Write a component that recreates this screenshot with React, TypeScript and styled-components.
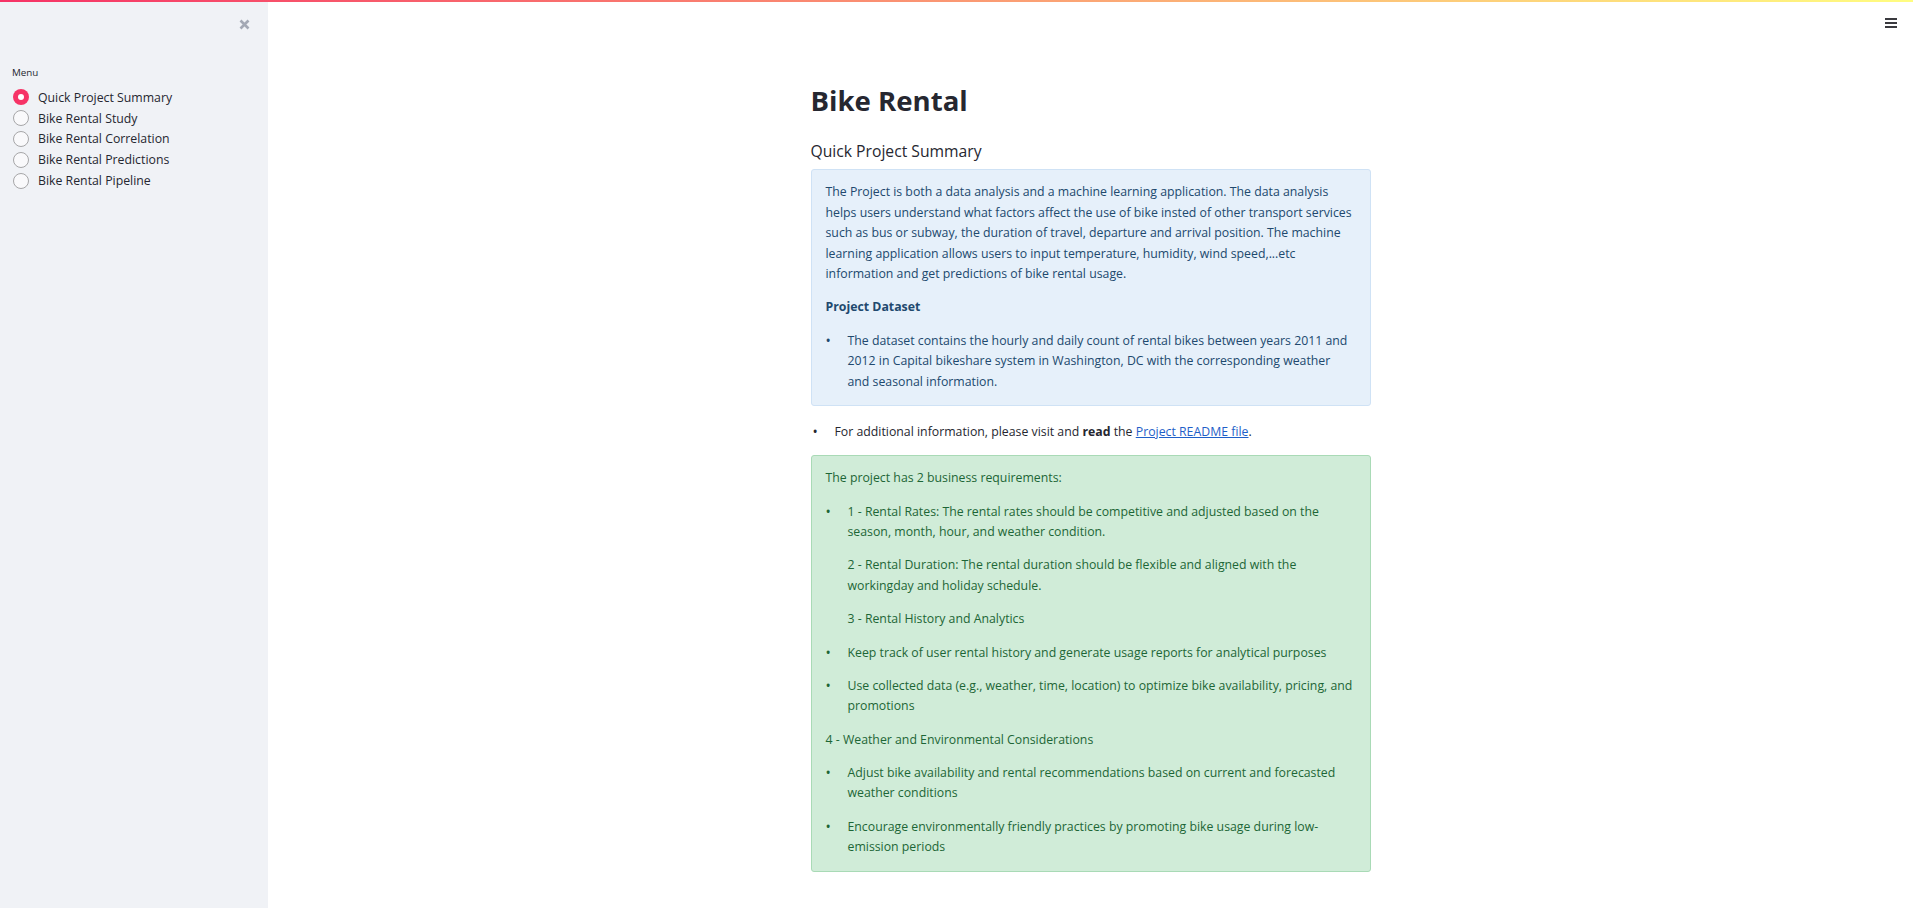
import React from "react";
import styled, { createGlobalStyle } from "styled-components";

const GlobalStyle = createGlobalStyle`
  html, body { margin: 0; padding: 0; background: #ffffff; }
  body { font-family: "Open Sans", "Noto Sans", "Liberation Sans", sans-serif; color: #262730; }
  * { box-sizing: border-box; }
`;

const Decoration = styled.div`
  position: fixed;
  top: 0;
  left: 0;
  right: 0;
  height: 2px;
  background: linear-gradient(90deg, #f63366, #fffd80);
  z-index: 10;
`;

const Shell = styled.div`
  display: flex;
  min-height: 100vh;
`;

const Sidebar = styled.aside`
  width: 268px;
  flex-shrink: 0;
  background: #f0f2f6;
  padding: 0 13px;
  display: flex;
  flex-direction: column;
`;

const SidebarHeader = styled.div`
  display: flex;
  justify-content: flex-end;
  padding: 17px 4px 0 0;
  height: 66px;
`;

const CloseButton = styled.button`
  border: none;
  background: transparent;
  padding: 0;
  width: 14px;
  height: 14px;
  display: flex;
  align-items: center;
  justify-content: center;
  cursor: pointer;
`;

const WidgetLabel = styled.div`
  font-size: 9.8px;
  line-height: 14px;
  color: #262730;
  margin-left: -1px;
  margin-bottom: 7px;
`;

const RadioGroup = styled.div`
  display: flex;
  flex-direction: column;
`;

const RadioRow = styled.label`
  display: flex;
  align-items: center;
  height: 20.8px;
  gap: 9px;
  font-size: 12.3px;
  color: #262730;
  cursor: pointer;
`;

const RadioCircle = styled.span<{ $checked: boolean }>`
  width: 16px;
  height: 16px;
  border-radius: 50%;
  flex-shrink: 0;
  display: flex;
  align-items: center;
  justify-content: center;
  background: ${(p) => (p.$checked ? "#f63366" : "#f9f9fb")};
  border: ${(p) => (p.$checked ? "none" : "1.5px solid #a6a6a8")};
  &::after {
    content: "";
    display: ${(p) => (p.$checked ? "block" : "none")};
    width: 6px;
    height: 6px;
    border-radius: 50%;
    background: #ffffff;
  }
`;

const Main = styled.main`
  flex: 1;
  position: relative;
  display: flex;
  justify-content: center;
`;

const MenuButton = styled.button`
  position: absolute;
  top: 16px;
  right: 15px;
  width: 14px;
  height: 14px;
  border: none;
  background: transparent;
  display: flex;
  flex-direction: column;
  justify-content: space-between;
  padding: 2px 1px;
`;

const MenuLine = styled.span`
  display: block;
  height: 1.6px;
  width: 12px;
  background: #3a3a3f;
`;

const Content = styled.div`
  width: 560px;
  padding-top: 82px;
  padding-bottom: 40px;
  display: flex;
  flex-direction: column;
`;

const Title = styled.h1`
  margin: 0;
  font-size: 27.6px;
  line-height: 36px;
  font-weight: 700;
  color: #262730;
`;

const SubHeading = styled.h3`
  margin: 23px 0 8px;
  font-size: 15.7px;
  line-height: 20px;
  font-weight: 400;
  color: #262730;
`;

const Alert = styled.div<{ $kind: "info" | "success" }>`
  border-radius: 3px;
  padding: 12px 14px 0;
  font-size: 12.3px;
  line-height: 20.5px;
  background: ${(p) => (p.$kind === "info" ? "#e6f0fa" : "#d0ecd8")};
  border: 1px solid ${(p) => (p.$kind === "info" ? "#cfe2f5" : "#a9dab6")};
  color: ${(p) => (p.$kind === "info" ? "#21496e" : "#1d6636")};
`;

const Para = styled.p<{ $bold?: boolean; $endInset?: number }>`
  margin: 0 0 12.8px;
  padding-right: ${(p) => p.$endInset ?? 0}px;
  font-weight: ${(p) => (p.$bold ? 700 : 400)};
`;

const List = styled.ul<{ $inset?: number }>`
  list-style: none;
  margin: 0;
  padding: 0 0 0 ${(p) => p.$inset ?? 0}px;
`;

const Item = styled.li`
  display: grid;
  grid-template-columns: 22px 1fr;
`;

const Marker = styled.span`
  font-size: 14px;
  line-height: 20.5px;
`;

const Plain = styled.div`
  margin: 16px 0 13px;
  font-size: 12.3px;
  line-height: 20.5px;
  color: #262730;
`;

const Link = styled.a`
  color: #1f5fc8;
  text-decoration: underline;
`;

const Bullet: React.FC<{ children: React.ReactNode }> = ({ children }) => (
  <Item>
    <Marker>•</Marker>
    <div>{children}</div>
  </Item>
);

const menu = [
  "Quick Project Summary",
  "Bike Rental Study",
  "Bike Rental Correlation",
  "Bike Rental Predictions",
  "Bike Rental Pipeline",
];

export default function App() {
  return (
    <>
      <GlobalStyle />
      <Decoration />
      <Shell>
        <Sidebar>
          <SidebarHeader>
            <CloseButton aria-label="Close sidebar">
              <svg width="11" height="11" viewBox="0 0 11 11">
                <path d="M1.5 1.5 L9.5 9.5 M9.5 1.5 L1.5 9.5" stroke="#a3a8b4" strokeWidth="2.6" strokeLinecap="butt" />
              </svg>
            </CloseButton>
          </SidebarHeader>
          <WidgetLabel>Menu</WidgetLabel>
          <RadioGroup>
            {menu.map((m, i) => (
              <RadioRow key={m}>
                <RadioCircle $checked={i === 0} />
                {m}
              </RadioRow>
            ))}
          </RadioGroup>
        </Sidebar>
        <Main>
          <MenuButton aria-label="Main menu">
            <MenuLine />
            <MenuLine />
            <MenuLine />
          </MenuButton>
          <Content>
            <Title>Bike Rental</Title>
            <SubHeading>Quick Project Summary</SubHeading>
            <Alert $kind="info">
              <Para>
                The Project is both a data analysis and a machine learning application. The data analysis helps users
                understand what factors affect the use of bike insted of other transport services such as bus or subway,
                the duration of travel, departure and arrival position. The machine learning application allows users to
                input temperature, humidity, wind speed,...etc information and get predictions of bike rental usage.
              </Para>
              <Para $bold>Project Dataset</Para>
              <List>
                <Bullet>
                  <Para $endInset={4}>
                    The dataset contains the hourly and daily count of rental bikes between years 2011 and 2012 in Capital
                    bikeshare system in Washington, DC with the corresponding weather and seasonal information.
                  </Para>
                </Bullet>
              </List>
            </Alert>
            <Plain>
              <List $inset={2}>
                <Bullet>
                  For additional information, please visit and <b>read</b> the{" "}
                  <Link href="#">Project README file</Link>.
                </Bullet>
              </List>
            </Plain>
            <Alert $kind="success">
              <Para>The project has 2 business requirements:</Para>
              <List>
                <Bullet>
                  <Para>
                    1 - Rental Rates: The rental rates should be competitive and adjusted based on the season, month,
                    hour, and weather condition.
                  </Para>
                  <Para>
                    2 - Rental Duration: The rental duration should be flexible and aligned with the workingday and
                    holiday schedule.
                  </Para>
                  <Para>3 - Rental History and Analytics</Para>
                </Bullet>
                <Bullet>
                  <Para>Keep track of user rental history and generate usage reports for analytical purposes</Para>
                </Bullet>
                <Bullet>
                  <Para>
                    Use collected data (e.g., weather, time, location) to optimize bike availability, pricing, and
                    promotions
                  </Para>
                </Bullet>
              </List>
              <Para>4 - Weather and Environmental Considerations</Para>
              <List>
                <Bullet>
                  <Para>
                    Adjust bike availability and rental recommendations based on current and forecasted weather
                    conditions
                  </Para>
                </Bullet>
                <Bullet>
                  <Para>Encourage environmentally friendly practices by promoting bike usage during low-emission periods</Para>
                </Bullet>
              </List>
            </Alert>
          </Content>
        </Main>
      </Shell>
    </>
  );
}
